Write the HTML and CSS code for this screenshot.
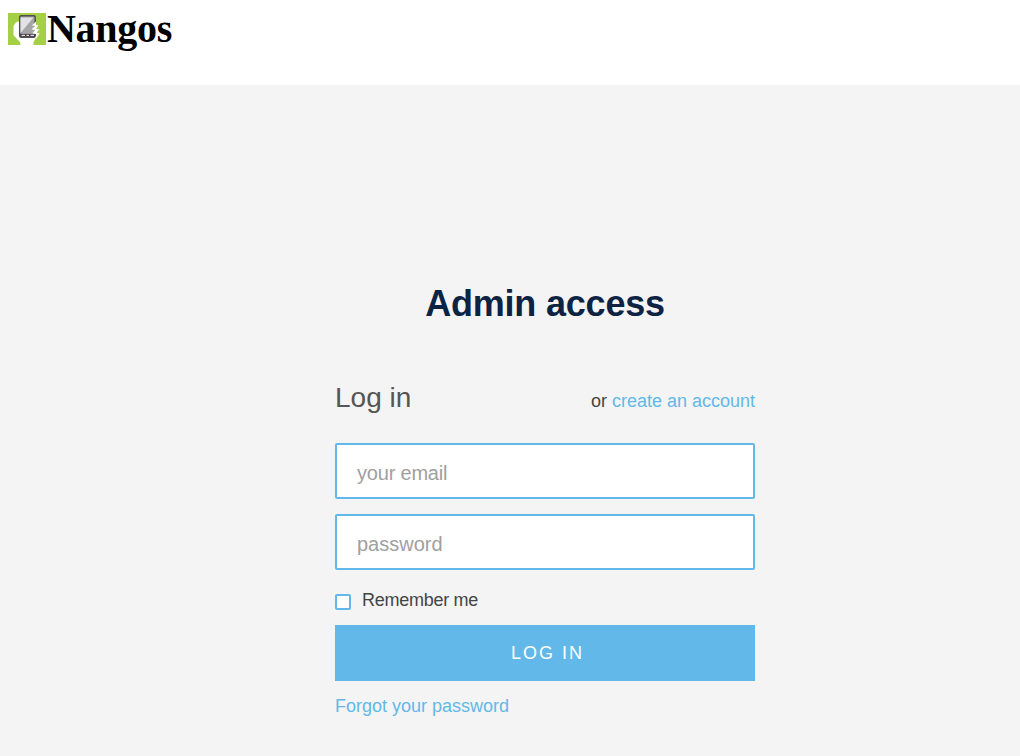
FILE: index.html
```html
<!DOCTYPE html>
<html lang="en">
<head>
<meta charset="utf-8">
<title>Nangos</title>
<link rel="stylesheet" href="styles.css">
</head>
<body>
<header class="header">
  <svg class="logo" viewBox="0 0 38 32" aria-hidden="true">
    <rect width="38" height="32" fill="#a5cf45"/>
    <path d="M12.500 32L12 29L8.500 25.500L5.500 22V13L8 9.500L11 8V23H29L25.500 29V32Z" fill="#fff"/>
    <rect x="11.700" y="2.700" width="15.500" height="21.500" rx="1.500" fill="#a5a5a8" stroke="#504c52" stroke-width="1.500"/>
    <path d="M12.500 4.500H25.500L12.500 20Z" fill="#e2e2e4"/>
    <path d="M12 22.300H27" stroke="#403c42" stroke-width="2.800"/>
    <path d="M13.500 22.300H17M18.500 22.300H21M22.500 22.300H26" stroke="#ddd" stroke-width="1.200"/>
    <path d="M28 8.500L24 12.500L27 13L23.500 16.500L27 17L24.500 20.500L28 21V26L31.500 20.500L28.500 19.500L31.500 16.500L28 15.500L30.500 12.500L28 12Z" fill="#fff"/>
  </svg>
  <h1 class="brand">Nangos</h1>
</header>
<main class="page">
  <form class="login">
    <h2 class="title">Admin access</h2>
    <div class="heading">
      <h3 class="subtitle">Log in</h3>
      <p class="alt">or <a class="link" href="#">create an account</a></p>
    </div>
    <input class="field email" type="email" placeholder="your email">
    <input class="field" type="password" placeholder="password">
    <label class="remember"><input class="check" type="checkbox"><span class="remember-text">Remember me</span></label>
    <button class="submit" type="button">LOG IN</button>
    <a class="link forgot" href="#">Forgot your password</a>
  </form>
</main>
</body>
</html>
```
FILE: styles.css
```css
* { box-sizing: border-box; }
body { margin: 0; background: #f4f4f4; font-family: "Liberation Sans", Arial, sans-serif; }
h1, h2, h3, p { margin: 0; font-weight: normal; }
.header { display: flex; height: 85px; padding: 6px 8px; background: #fff; }
.logo { width: 38px; height: 32px; margin-top: 7px; }
.brand { margin-left: 1px; font: bold 40px/46px "Liberation Serif", serif; letter-spacing: -.3px; }
.page { height: 671px; padding: 198px 0 0 335px; overflow: hidden; }
.login { display: flex; flex-direction: column; width: 420px; }
.title { font-size: 36px; font-weight: bold; line-height: 42px; letter-spacing: -.2px; text-align: center; color: #0d2344; }
.heading { display: flex; justify-content: space-between; height: 118px; padding-top: 56px; }
.subtitle { padding-top: 1px; font-size: 28px; line-height: 32px; color: #555; }
.alt { padding-top: 10px; font-size: 18px; line-height: 21px; color: #444; }
.link { color: #62b8e8; text-decoration: none; }
.field { width: 420px; height: 56px; margin: 0 0 15px; padding: 4px 20px 0; border: 2px solid #62b8e8; border-radius: 2px; background: #fff; font: 20px "Liberation Sans", sans-serif; }
.email { letter-spacing: -.2px; }
.field::placeholder { color: #a0a0a0; }
.remember { display: flex; gap: 11px; height: 40px; padding-top: 5px; font-size: 18px; line-height: 21px; color: #444; }
.remember-text { letter-spacing: -.27px; }
.check { appearance: none; width: 16px; height: 16px; margin: 4px 0 0; border: 2px solid #62b8e8; border-radius: 2px; background: #fff; }
.submit { height: 56px; padding: 0 0 0 5px; border: 0; background: #62b8e8; color: #fff; font: 18px "Liberation Sans", sans-serif; letter-spacing: 2px; }
.forgot { margin-top: 15px; font-size: 18px; line-height: 21px; }
```
